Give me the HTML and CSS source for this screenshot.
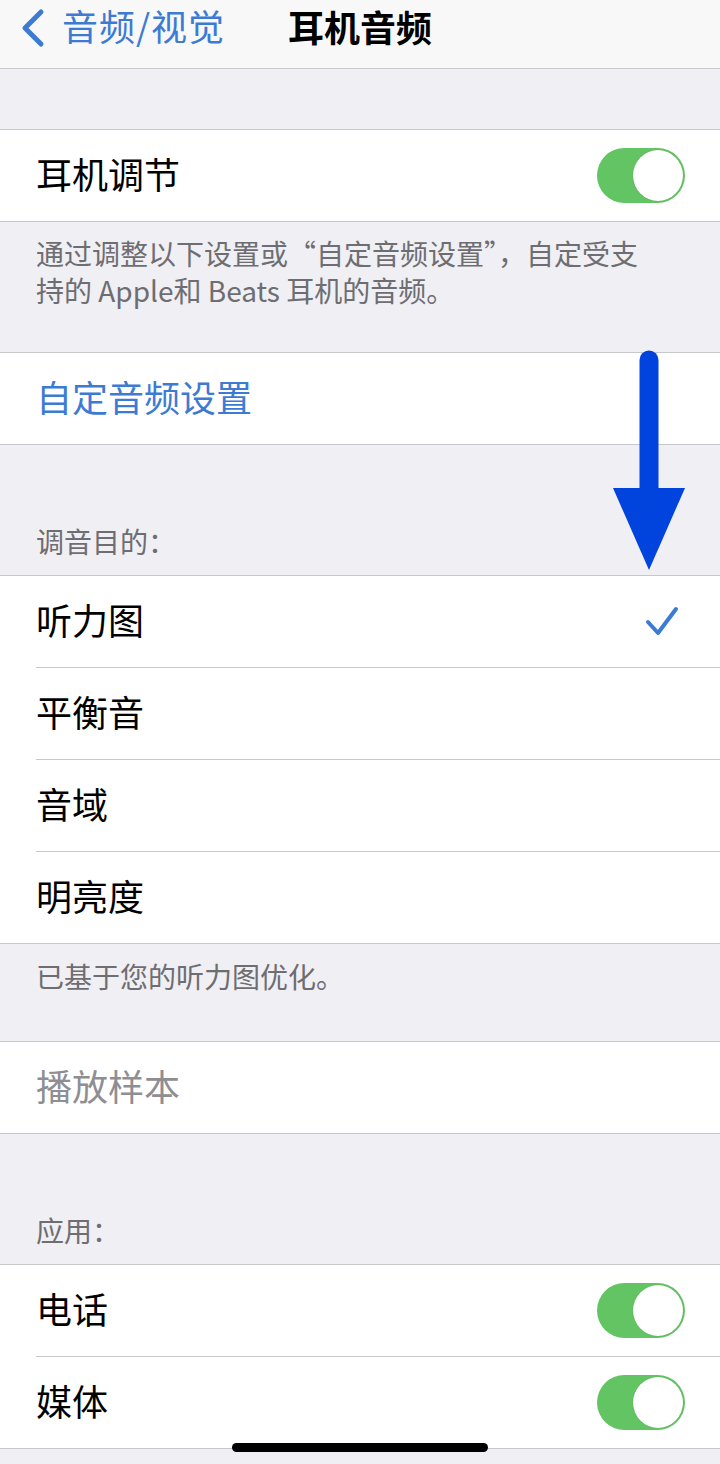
FILE: index.html
```html
<!DOCTYPE html>
<html lang="zh-CN">
<head>
    <meta charset="UTF-8">
    <meta name="viewport" content="width=device-width, initial-scale=1.0">
    <title>耳机音频</title>
    <link rel="stylesheet" href="styles.css">
</head>
<body>
    <div class="screen">
        <header class="nav">
            <a class="back" href="#">
                <svg class="chevron" width="26" height="40" viewBox="0 0 26 40">
                    <path d="M21 4 L5 20 L21 36" fill="none" stroke="currentColor" stroke-width="5" stroke-linecap="round" stroke-linejoin="round"/>
                </svg>
                <span>音频/视觉</span>
            </a>
            <h1 class="title">耳机音频</h1>
        </header>

        <div class="gap"></div>

        <div class="group">
            <div class="row">
                <div class="row-inner">
                    <span class="label">耳机调节</span>
                    <span class="switch on"><span class="knob"></span></span>
                </div>
            </div>
        </div>
        <p class="footer first">通过调整以下设置或“自定音频设置”，自定受支持的 Apple和 Beats 耳机的音频。</p>

        <div class="group">
            <div class="row">
                <div class="row-inner">
                    <span class="label link">自定音频设置</span>
                </div>
            </div>
        </div>

        <p class="header">调音目的：</p>
        <div class="group">
            <div class="row">
                <div class="row-inner">
                    <span class="label">听力图</span>
                    <svg class="check" width="36" height="32" viewBox="0 0 36 32">
                        <path d="M4 17 L14 28 L32 4" fill="none" stroke="currentColor" stroke-width="4" stroke-linecap="round" stroke-linejoin="round"/>
                    </svg>
                </div>
            </div>
            <div class="row">
                <div class="row-inner"><span class="label">平衡音</span></div>
            </div>
            <div class="row">
                <div class="row-inner"><span class="label">音域</span></div>
            </div>
            <div class="row">
                <div class="row-inner"><span class="label">明亮度</span></div>
            </div>
        </div>
        <p class="footer">已基于您的听力图优化。</p>

        <div class="group">
            <div class="row">
                <div class="row-inner">
                    <span class="label disabled">播放样本</span>
                </div>
            </div>
        </div>

        <p class="header">应用：</p>
        <div class="group">
            <div class="row">
                <div class="row-inner">
                    <span class="label">电话</span>
                    <span class="switch on"><span class="knob"></span></span>
                </div>
            </div>
            <div class="row">
                <div class="row-inner">
                    <span class="label">媒体</span>
                    <span class="switch on"><span class="knob"></span></span>
                </div>
            </div>
        </div>

        <!-- annotation drawn over the screenshot -->
        <svg class="arrow" width="76" height="224" viewBox="0 0 76 224">
            <path d="M37 10 L37 140" stroke="#0044dd" stroke-width="19" stroke-linecap="round"/>
            <polygon points="1,138 73,138 37,220" fill="#0044dd"/>
        </svg>

        <div class="home-bar"></div>
    </div>
</body>
</html>
```

FILE: styles.css
```css
body {
    margin: 0;
    padding: 0;
    background-color: #efeff4;
    font-family: "Noto Sans CJK SC", "Noto Sans", sans-serif;
    color: #000;
}

.screen {
    position: relative;
    width: 720px;
    height: 1464px;
    overflow: hidden;
    background-color: #efeff4;
}

.nav {
    position: relative;
    height: 68px;
    background-color: #f8f8f8;
    border-bottom: 1px solid #c8c7cc;
    display: flex;
    align-items: flex-start;
    justify-content: center;
}

.back {
    position: absolute;
    left: 20px;
    top: 8px;
    display: flex;
    align-items: center;
    gap: 16px;
    color: #3d7bd3;
    text-decoration: none;
    font-size: 36px;
    line-height: 40px;
    letter-spacing: 1px;
}

.back span {
    margin-top: -6px;
}

.chevron {
    display: block;
}

.title {
    margin: 0;
    font-size: 36px;
    font-weight: bold;
    line-height: 52px;
}

.gap {
    height: 60px;
}

.group {
    background-color: #fff;
    border-top: 1px solid #c8c7cc;
    border-bottom: 1px solid #c8c7cc;
}

.row {
    padding-left: 36px;
}

.row-inner {
    height: 85px;
    padding-bottom: 6px;
    display: flex;
    align-items: center;
    justify-content: space-between;
    padding-right: 35px;
}

.row + .row .row-inner {
    border-top: 1px solid #c8c7cc;
}

.label {
    font-size: 36px;
    line-height: 44px;
}

.label.link {
    color: #3d7bd3;
}

.label.disabled {
    color: #8e8e93;
}

.switch {
    width: 88px;
    height: 55px;
    border-radius: 28px;
    background-color: #62c462;
    display: flex;
    align-items: center;
    justify-content: flex-end;
    padding: 0 2px;
    box-sizing: border-box;
    margin-top: 6px;
}

.switch .knob {
    width: 50px;
    height: 51px;
    border-radius: 50%;
    background-color: #fff;
    box-shadow: 0 0 1px rgba(0, 0, 0, 0.25);
}

.check {
    color: #3d7bd3;
    margin-right: 5px;
    margin-top: 4px;
}

.footer, .header {
    margin: 0;
    padding: 0 36px;
    font-size: 28px;
    line-height: 37px;
    color: #6d6d72;
}

.footer {
    padding-top: 14px;
    padding-bottom: 46px;
}

.footer.first {
    padding-top: 13px;
    padding-bottom: 43px;
    padding-right: 60px;
}

.header {
    padding-top: 78px;
    padding-bottom: 15px;
}

.arrow {
    position: absolute;
    left: 612px;
    top: 350px;
}

.home-bar {
    position: absolute;
    left: 232px;
    top: 1443px;
    width: 256px;
    height: 9px;
    border-radius: 5px;
    background-color: #000;
}
```
